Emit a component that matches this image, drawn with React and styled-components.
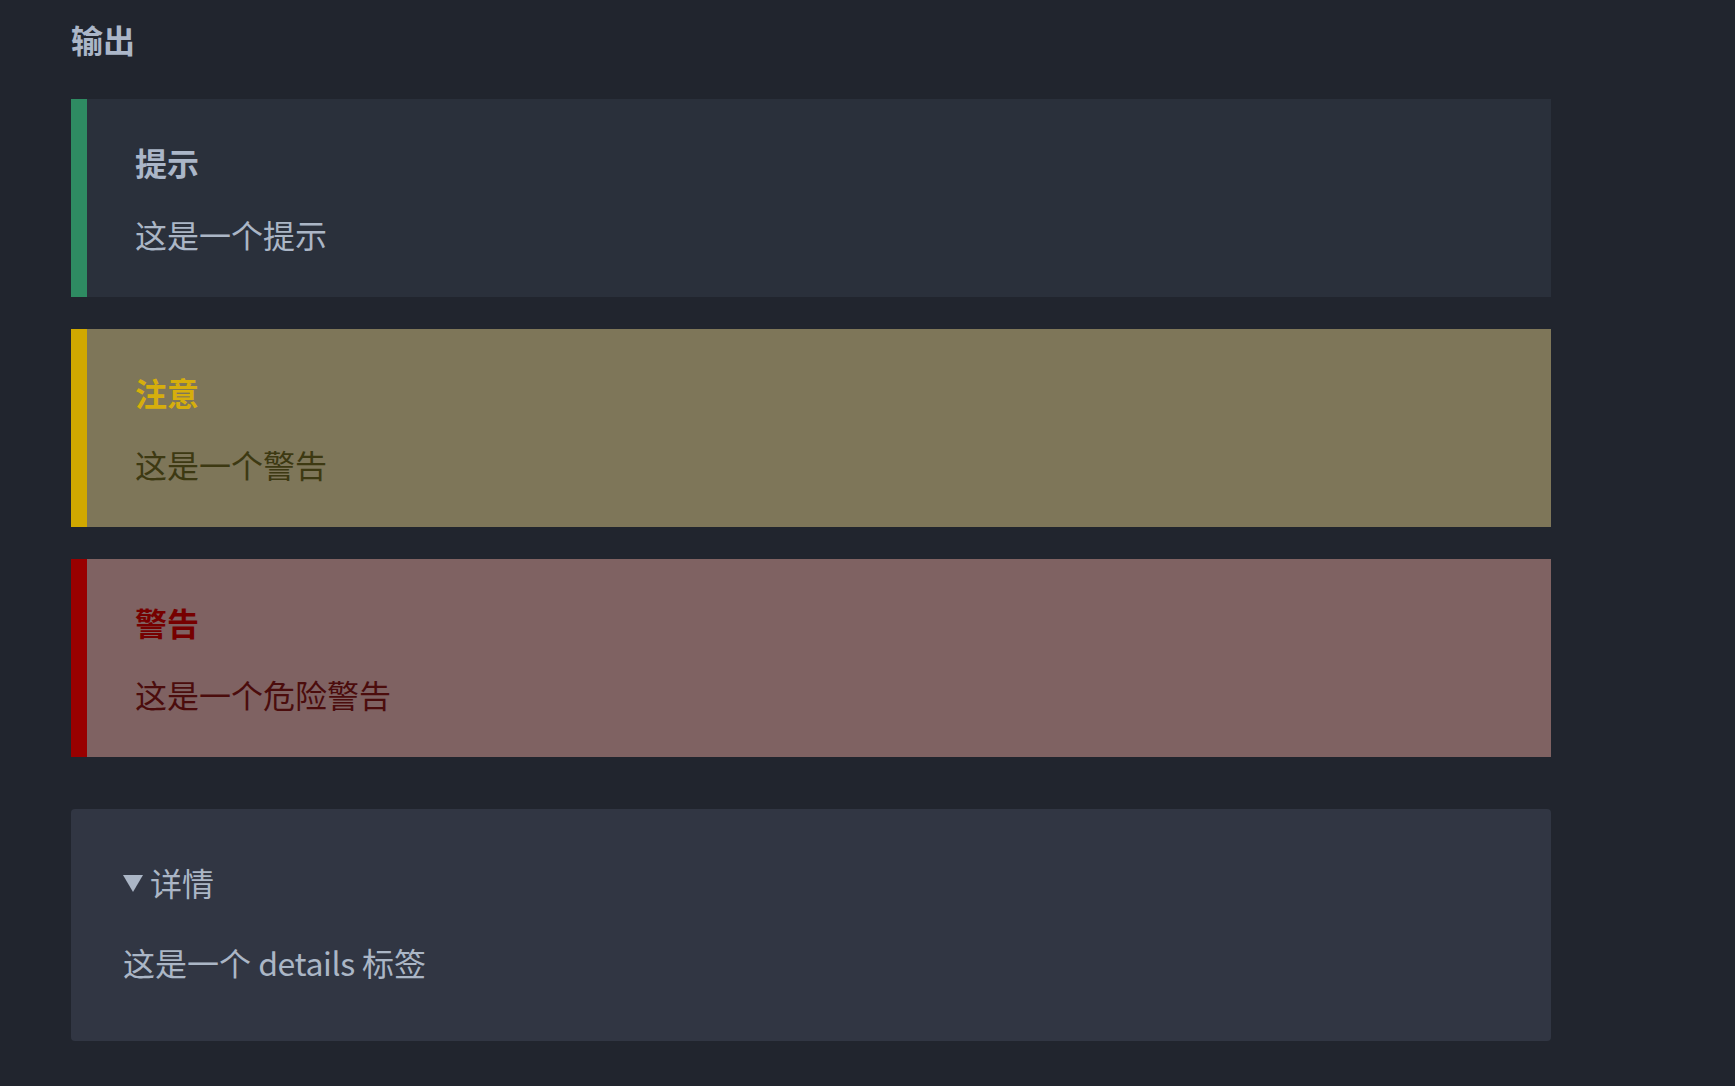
import React from "react";
import styled, { createGlobalStyle } from "styled-components";

const GlobalStyle = createGlobalStyle`
    html, body {
        margin:0;
        padding:0;
        background:#21252e;
    }
    body {
        font-family:"Noto Sans CJK SC", "Noto Sans", sans-serif;
        color:#abb6c6;
    }
`;

const Page = styled.div`
    padding:15px 0 45px 71px;
    width:1480px;
`;

const Heading = styled.h2`
    margin:0 0 36px;
    font-size:32px;
    line-height:48px;
    font-weight:700;
    color:#abb6c8;
`;

const Callout = styled.div`
    display:flex;
    flex-direction:column;
    gap:24px;
    padding:39px 48px 39px 48px;
    margin-bottom:32px;
    border-left:16px solid ${props => props.accent};
    background:${props => props.bg};
`;

const CalloutTitle = styled.div`
    font-size:32px;
    line-height:48px;
    font-weight:700;
    color:${props => props.color};
`;

const CalloutText = styled.div`
    font-size:32px;
    line-height:48px;
    color:${props => props.color};
`;

const Details = styled.div`
    margin-top:52px;
    padding:49px 52px 55px;
    border-radius:4px;
    background:#313643;
    display:flex;
    flex-direction:column;
    gap:32px;
`;

const Summary = styled.div`
    display:flex;
    align-items:center;
    font-size:32px;
    line-height:48px;
    color:#abb6c6;
`;

const Marker = styled.span`
    width:0;
    height:0;
    border-left:10px solid transparent;
    border-right:10px solid transparent;
    border-top:17px solid #abb6c6;
    margin:2px 7px 0 0;
`;

const DetailsText = styled.div`
    font-size:32px;
    line-height:48px;
    color:#abb6c6;
`;

const Latin = styled.span`
    letter-spacing:-0.4px;
`;

const callouts = [
    { title: "提示", text: "这是一个提示", accent: "#2e8b62", bg: "#2a303b", titleColor: "#abb6c8", textColor: "#abb6c6" },
    { title: "注意", text: "这是一个警告", accent: "#d0a800", bg: "#7e7659", titleColor: "#d6ae0c", textColor: "#3d3912" },
    { title: "警告", text: "这是一个危险警告", accent: "#990000", bg: "#7f6262", titleColor: "#760000", textColor: "#4b0c0c" },
];

function App(){
    return(
        <>
            <GlobalStyle/>
            <Page>
                <Heading>输出</Heading>
                {callouts.map(c => (
                    <Callout key={c.title} accent={c.accent} bg={c.bg}>
                        <CalloutTitle color={c.titleColor}>{c.title}</CalloutTitle>
                        <CalloutText color={c.textColor}>{c.text}</CalloutText>
                    </Callout>
                ))}
                <Details>
                    <Summary><Marker/>详情</Summary>
                    <DetailsText>这是一个 <Latin>details</Latin> 标签</DetailsText>
                </Details>
            </Page>
        </>
    );
}
export default App;
